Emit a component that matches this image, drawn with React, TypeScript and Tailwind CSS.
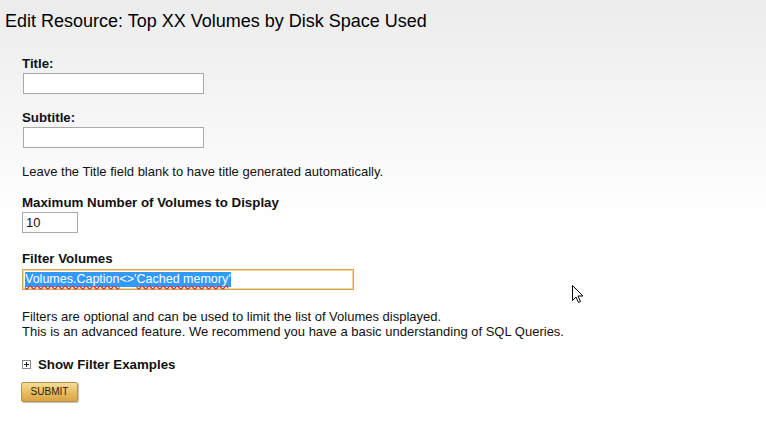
export default function App() {
	return (
		<div className="relative min-h-[448px] w-full bg-gradient-to-b from-[#ececec] via-white to-white font-['Arial','Liberation_Sans',sans-serif] text-[#111]">
			{/* Header */}
			<h1 className="px-[5px] pt-[11px] text-[18px] leading-[20px] text-black">
				Edit Resource: Top XX Volumes by Disk Space Used
			</h1>

			<div className="pl-[22px]">
				{/* Title */}
				<div className="mt-[25px] text-[13.3px] font-bold leading-[15px]">Title:</div>
				<div className="ml-[1px] mt-[2px] h-[21px] w-[181px] border border-[#a9a9a9] bg-white"></div>

				{/* Subtitle */}
				<div className="mt-[16px] text-[13.3px] font-bold leading-[15px]">Subtitle:</div>
				<div className="ml-[1px] mt-[2px] h-[21px] w-[181px] border border-[#a9a9a9] bg-white"></div>

				<p className="mt-[16px] text-[13px] leading-[15px]">
					Leave the Title field blank to have title generated automatically.
				</p>

				{/* Max volumes */}
				<div className="mt-[16px] text-[13.3px] font-bold leading-[15px]">
					Maximum Number of Volumes to Display
				</div>
				<div className="mt-[2px] flex h-[21px] w-[56px] items-center border border-[#a9a9a9] bg-white px-[3px] text-[13px]">
					10
				</div>

				{/* Filter */}
				<div className="mt-[18px] text-[13.3px] font-bold leading-[15px]">Filter Volumes</div>
				<div className="mt-[3px] flex h-[21px] w-[332px] items-center border border-[#d4a450] bg-white px-[2px] shadow-[inset_0_0_0_1px_#f3d79c] text-[12.5px] leading-[15px]">
					<span className="bg-[#3399ff] text-white">
						<span className="underline decoration-wavy decoration-[#e03030] underline-offset-2">Volumes.Caption</span>
						{"<>'"}
						<span className="underline decoration-wavy decoration-[#e03030] underline-offset-2">Cached memory</span>'
					</span>
				</div>

				<p className="mt-[19px] text-[13px] leading-[15px]">
					Filters are optional and can be used to limit the list of Volumes displayed.
					<br />
					This is an advanced feature. We recommend you have a basic understanding of SQL Queries.
				</p>

				{/* Show examples */}
				<div className="mt-[18px] flex items-center gap-[7px] text-[13.3px] font-bold leading-[15px]">
					<svg width="9" height="9" viewBox="0 0 9 9" className="shrink-0">
						<rect x="0.5" y="0.5" width="8" height="8" fill="#fff" stroke="#8a8a8a" />
						<path d="M2 4.5h5M4.5 2v5" stroke="#222" strokeWidth="1" />
					</svg>
					Show Filter Examples
				</div>

				<button className="-ml-[1px] mt-[10px] h-[20px] w-[57px] rounded-[2px] border border-[#b8914a] bg-gradient-to-b from-[#f7dc9a] via-[#e9be63] to-[#d9a445] text-[10px] leading-[18px] text-[#2a1d08] shadow-[1px_1px_1px_rgba(0,0,0,0.25)]">
					SUBMIT
				</button>
			</div>

			{/* Mouse pointer */}
			<svg className="absolute left-[572px] top-[285px]" width="12" height="19" viewBox="0 0 12 19">
				<path d="M0.5 0.5V15.5L4 12L6.5 17.5L8.5 16.5L6 11H11Z" fill="#fff" stroke="#000" strokeWidth="1" strokeLinejoin="round" />
			</svg>
		</div>
	);
}
